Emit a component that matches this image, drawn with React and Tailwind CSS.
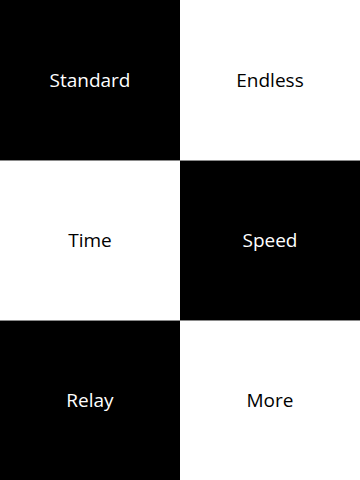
import React from "react";

const tiles = [
  { label: "Standard", dark: true },
  { label: "Endless", dark: false },
  { label: "Time", dark: false },
  { label: "Speed", dark: true },
  { label: "Relay", dark: true },
  { label: "More", dark: false },
];

const App = () => {
  return (
    <div
      className="grid grid-cols-2 w-[360px] h-[480px] overflow-hidden"
      style={{ fontFamily: '"Open Sans", "Noto Sans", sans-serif' }}
    >
      {tiles.map((t, i) => (
        <div
          key={t.label}
          className={`flex items-center justify-center h-[160px] text-[19px] ${
            i >= 2 ? "border-t border-[#8a8a8a]" : ""
          } ${t.dark ? "bg-black text-white" : "bg-white text-black"}`}
        >
          {t.label}
        </div>
      ))}
    </div>
  );
};

export default App;
